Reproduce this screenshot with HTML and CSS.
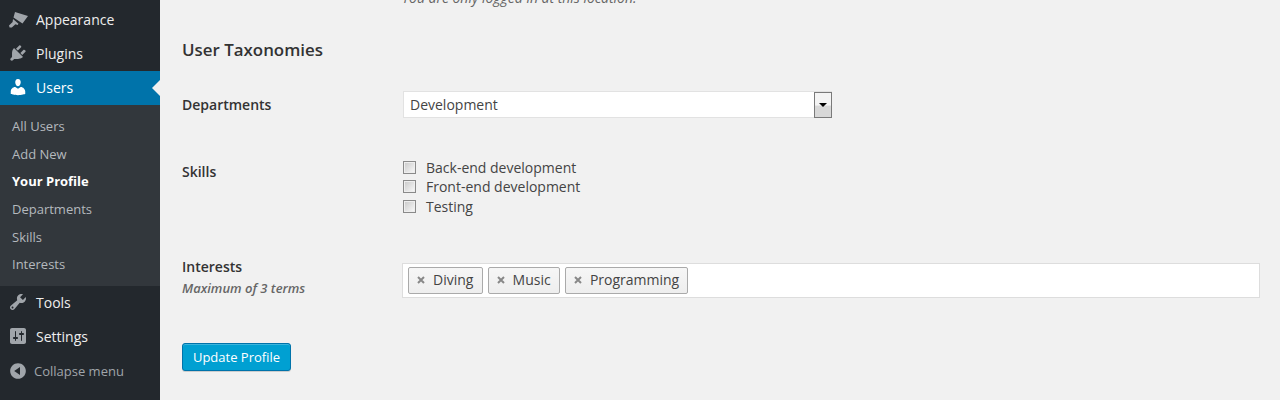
FILE: index.html
```html
<!DOCTYPE html>
<html lang="en">
<head>
    <meta charset="UTF-8">
    <title>Your Profile</title>
    <link rel="stylesheet" href="styles.css">
</head>
<body>

<div class="wrap">
    <div class="sidebar">
        <ul class="menu">
            <li class="menu-item">
                <svg class="icon" viewBox="0 0 20 20"><path d="M7 3 L20 7 L14.5 14.5 L5.5 8.5 Z M5 10 L10.5 14.8 L9.6 16 L7.4 15.2 L3.8 18.6 L1.6 18.6 L1 16.6 L4.6 13 Z"/></svg>
                <span>Appearance</span>
            </li>
            <li class="menu-item">
                <svg class="icon" viewBox="0 0 20 20"><path d="M13.11 4.36L9.87 7.6 8 5.73l3.24-3.24c.35-.34 1.05-.2 1.56.32.52.51.66 1.21.31 1.55zm-8 1.77l.91-1.12 9.01 9.01-1.19.84c-.71.71-2.63 1.16-3.82 1.16H6.14L4.9 17.26c-.59.59-1.54.59-2.12 0-.59-.58-.59-1.53 0-2.12l1.24-1.24v-3.88c0-1.13.4-3.19 1.09-3.89zm7.26 3.97l3.24-3.24c.34-.35 1.04-.21 1.55.31.52.51.66 1.21.31 1.55l-3.24 3.25z"/></svg>
                <span>Plugins</span>
            </li>
            <li class="menu-item current">
                <svg class="icon" viewBox="0 0 20 20"><path d="M10 9.25c-2.27 0-2.73-3.44-2.73-3.44C7 4.02 7.82 2 9.97 2c2.16 0 2.98 2.02 2.71 3.81 0 0-.41 3.44-2.68 3.44zm0 2.57L12.72 10c2.39 0 4.52 2.33 4.52 4.53v2.49s-3.65 1.13-7.24 1.13c-3.65 0-7.24-1.13-7.24-1.13v-2.49c0-2.25 1.94-4.48 4.47-4.48z"/></svg>
                <span>Users</span>
            </li>
            <li class="submenu">
                <a>All Users</a>
                <a>Add New</a>
                <a class="active">Your Profile</a>
                <a>Departments</a>
                <a>Skills</a>
                <a>Interests</a>
            </li>
            <li class="menu-item">
                <svg class="icon" viewBox="0 0 20 20"><path d="M16.68 9.77c-1.34 1.34-3.3 1.67-4.95.99l-5.41 6.52c-.99.99-2.59.99-3.58 0s-.99-2.59 0-3.57l6.52-5.42c-.68-1.65-.35-3.61.99-4.95 1.28-1.28 3.12-1.62 4.72-1.06l-2.89 2.89 2.82 2.82 2.86-2.87c.53 1.58.18 3.39-1.08 4.65zM3.81 16.21c.4.39 1.04.39 1.43 0 .4-.4.4-1.04 0-1.43-.39-.4-1.03-.4-1.43 0-.39.39-.39 1.03 0 1.43z"/></svg>
                <span>Tools</span>
            </li>
            <li class="menu-item">
                <svg class="icon" viewBox="0 0 20 20"><path d="M18 16V4c0-1.1-.9-2-2-2H4c-1.1 0-2 .9-2 2v12c0 1.1.9 2 2 2h12c1.1 0 2-.9 2-2zM8 11h1c.55 0 1 .45 1 1s-.45 1-1 1H8v1.5c0 .28-.22.5-.5.5s-.5-.22-.5-.5V13H6c-.55 0-1-.45-1-1s.45-1 1-1h1V5.5c0-.28.22-.5.5-.5s.5.22.5.5V11zm5-2h-1c-.55 0-1-.45-1-1s.45-1 1-1h1V5.5c0-.28.22-.5.5-.5s.5.22.5.5V7h1c.55 0 1 .45 1 1s-.45 1-1 1h-1v5.5c0 .28-.22.5-.5.5s-.5-.22-.5-.5V9z"/></svg>
                <span>Settings</span>
            </li>
            <li class="menu-item collapse">
                <svg class="icon" viewBox="0 0 20 20"><path d="M10 2.16c4.33 0 7.84 3.51 7.84 7.84s-3.51 7.84-7.84 7.84S2.16 14.33 2.16 10 5.71 2.16 10 2.16zm2 11.72V6.12L6.18 9.97z"/></svg>
                <span>Collapse menu</span>
            </li>
        </ul>
    </div>

    <div class="content">
        <p class="note">You are only logged in at this location.</p>
        <h3>User Taxonomies</h3>

        <div class="row row-departments">
            <div class="label">Departments</div>
            <div class="select">
                <span class="select-value">Development</span>
                <span class="select-btn"><span class="arrow"></span></span>
            </div>
        </div>

        <div class="row row-skills">
            <div class="label">Skills</div>
            <div class="checks">
                <label class="check"><span class="box"></span>Back-end development</label>
                <label class="check"><span class="box"></span>Front-end development</label>
                <label class="check"><span class="box"></span>Testing</label>
            </div>
        </div>

        <div class="row row-interests">
            <div class="label">Interests<em>Maximum of 3 terms</em></div>
            <div class="tags">
                <span class="tag"><svg class="tag-x" viewBox="0 0 8 8"><path d="M1 1 L7 7 M7 1 L1 7"/></svg>Diving</span>
                <span class="tag"><svg class="tag-x" viewBox="0 0 8 8"><path d="M1 1 L7 7 M7 1 L1 7"/></svg>Music</span>
                <span class="tag"><svg class="tag-x" viewBox="0 0 8 8"><path d="M1 1 L7 7 M7 1 L1 7"/></svg>Programming</span>
            </div>
        </div>

        <button class="update-btn">Update Profile</button>
    </div>
</div>

</body>
</html>
```

FILE: styles.css
```css
html, body {
    margin: 0;
    height: 400px;
    overflow: hidden;
}
body {
    font-family: "Open Sans", sans-serif;
    font-size: 14px;
    background: #f1f1f1;
    color: #444;
}
.wrap {
    display: flex;
    height: 400px;
}

/* sidebar */
.sidebar {
    width: 160px;
    flex: none;
    background: #23282d;
    padding-top: 3px;
    box-sizing: border-box;
}
.menu {
    list-style: none;
    margin: 0;
    padding: 0;
}
.menu-item {
    display: flex;
    align-items: center;
    height: 34px;
    padding-bottom: 2px;
    box-sizing: border-box;
    color: #eee;
    position: relative;
}
.menu-item .icon {
    width: 20px;
    height: 20px;
    margin: 0 8px;
    fill: #a0a5aa;
    flex: none;
}
.menu-item.current {
    background: #0073aa;
    color: #fff;
}
.menu-item.current .icon { fill: #fff; }
.menu-item.current::after {
    content: "";
    position: absolute;
    right: 0;
    top: 9px;
    border: 8px solid transparent;
    border-right-color: #f1f1f1;
    border-left-width: 0;
}
.menu-item.collapse {
    color: #a0a5aa;
    font-size: 13px;
    padding-bottom: 0;
}
.menu-item.collapse .icon { margin-right: 6px; }
.submenu {
    background: #32373c;
    padding: 8.2px 0 8px;
    height: 181px;
    box-sizing: border-box;
}
.submenu a {
    display: block;
    font-size: 13px;
    line-height: 27.6px;
    padding-left: 12px;
    color: #b4b9be;
}
.submenu a.active {
    color: #fff;
    font-weight: 700;
}

/* main form */
.content {
    flex: 1;
    padding-left: 22px;
    padding-right: 20px;
}
.note {
    margin: -12px 0 0 220px;
    font-style: italic;
    font-size: 13.95px;
    line-height: 20px;
    color: #666;
}
h3 {
    margin: 29px 0 0;
    font-size: 16.9px;
    font-weight: 600;
    line-height: 26px;
    color: #333;
}
.row {
    display: flex;
}
.label {
    width: 220px;
    flex: none;
    font-weight: 600;
    color: #333;
}
.label em {
    display: block;
    font-size: 13px;
    font-weight: 600;
    color: #666;
    margin-top: 1px;
}
.row-departments {
    margin-top: 28px;
    align-items: center;
}
.select {
    display: flex;
    width: 429px;
    height: 27px;
    margin-left: 1px;
    box-sizing: border-box;
    background: #fff;
    border: 1px solid #e2e2e2;
    align-items: stretch;
    justify-content: space-between;
}
.select-value {
    padding-left: 6px;
    line-height: 25px;
}
.select-btn {
    width: 18px;
    margin: 0 -1px -1px 0;
    box-sizing: border-box;
    border: 1px solid #7a7a7a;
    background: linear-gradient(#f4f4f4 50%, #d8d8d8 55%);
    display: flex;
    align-items: center;
    justify-content: center;
}
.arrow {
    border: 4px solid transparent;
    border-top: 4px solid #000;
    border-bottom-width: 0;
}
.row-skills {
    margin-top: 39px;
}
.row-skills .label { line-height: 26px; margin-top: 2px; }
.checks {
    margin-left: 1px;
    margin-top: 1px;
}
.check {
    display: flex;
    align-items: center;
    height: 19.3px;
}
.box {
    width: 13px;
    height: 13px;
    box-sizing: border-box;
    border: 1px solid #8a8a8a;
    background: linear-gradient(135deg, #c8c8c8, #fafafa);
    box-shadow: inset 0 0 0 1px #eee;
    margin-right: 10px;
}
.row-interests {
    margin-top: 47px;
}
.row-interests .label { line-height: 20px; margin-top: -6px; }
.tags {
    flex: 1;
    display: flex;
    gap: 5px;
    align-items: center;
    height: 35px;
    padding-left: 5px;
    box-sizing: border-box;
    background: #fff;
    border: 1px solid #ddd;
}
.tag {
    display: flex;
    align-items: center;
    height: 27px;
    padding: 0 8.2px 1px 8px;
    box-sizing: border-box;
    border: 1px solid #aaa;
    border-radius: 2px;
    background: linear-gradient(#f6f6f6, #eee);
    color: #444;
}
.tag-x {
    width: 8px;
    height: 8px;
    margin: 1px 8px 0 0;
    stroke: #888;
    stroke-width: 2;
    fill: none;
}
.update-btn {
    display: block;
    margin-top: 45px;
    width: 109px;
    height: 28px;
    padding: 0;
    font-family: "Open Sans", sans-serif;
    font-size: 13px;
    color: #fff;
    background: #00a0d2;
    border: 1px solid #0073aa;
    border-radius: 3px;
    box-shadow: inset 0 1px 0 rgba(120,200,230,.5), 0 1px 0 rgba(0,0,0,.15);
}
```
